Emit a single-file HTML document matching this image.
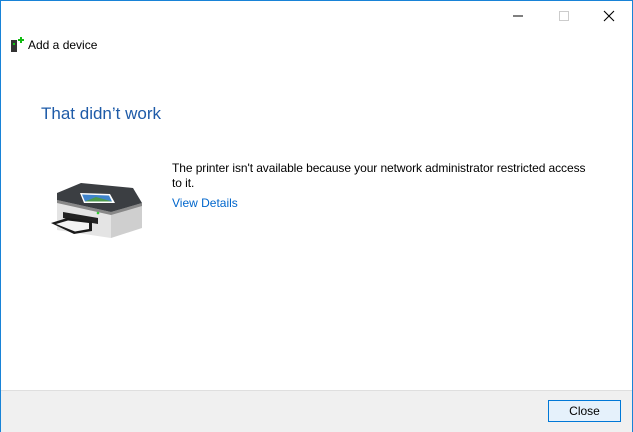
<!DOCTYPE html>
<html><head><meta charset="utf-8"><style>
*{margin:0;padding:0;box-sizing:border-box}
body{width:633px;height:432px;overflow:hidden;background:#fff;font-family:"Segoe UI","Liberation Sans",sans-serif;position:relative}
.frame{position:absolute;left:0;top:0;width:633px;height:432px;border:1px solid #1883d7;border-bottom:none}
.t{position:absolute;white-space:nowrap}
.foot{position:absolute;left:1px;right:1px;top:390px;bottom:0;background:#f0f0f0;border-top:1px solid #dfdfdf}
.btn{position:absolute;left:548px;top:400px;width:73px;height:22px;border:1px solid #0078d7;background:#e5f1fb;font-size:12px;text-align:center;line-height:20px;color:#000}
</style></head><body>
<div class="frame"></div>
<svg style="position:absolute;left:505px;top:8px" width="120" height="16">
<line x1="8" y1="8" x2="18" y2="8" stroke="#000" stroke-width="1"/>
<rect x="54.5" y="3.5" width="9" height="9" fill="none" stroke="#ccc"/>
<path d="M99 3L109 13M109 3L99 13" stroke="#000" stroke-width="1.1"/>
</svg>
<svg style="position:absolute;left:10px;top:37px" width="14" height="16">
<rect x="1" y="3" width="6" height="12" fill="#333"/>
<rect x="3" y="6" width="2" height="2" fill="#1c1"/>
<path d="M8 3h6M11 0v6" stroke="#1b1" stroke-width="2"/>
</svg>
<div class="t" style="left:28px;top:38px;font-size:12px;color:#000">Add a device</div>
<div class="t" style="left:41px;top:104px;font-size:17px;color:#1e5ba8">That didn’t work</div>
<svg style="position:absolute;left:48px;top:180px" width="95" height="60">
<path d="M9 20 L63 32 L63 58 L9 50 Z" fill="#e4e4e4"/>
<path d="M63 32 L94 23 L94 48 L63 58 Z" fill="#cfcfcf"/>
<path d="M9 20 L63 32 L94 23 L94 26 L63 35 L9 23 Z" fill="#888"/>
<path d="M9 13 L33 3 L85 8 L94 23 L63 32 L9 20 Z" fill="#3b3e42"/>
<path d="M32 13 L62 14 L67 23 L36 23 Z" fill="#fff"/>
<path d="M34 14.5 L61 15.5 L64 21.5 L37 21.5 Z" fill="#3f84cc"/>
<path d="M37 21.5 L48 17 L64 21.5Z" fill="#4c9a4c"/>
<path d="M15 32 L50 38 L50 44 L15 38 Z" fill="#222"/>
<circle cx="50" cy="33" r="1.3" fill="#3c3"/>
<path d="M3 43 L19 38 L44 41 L44 51 L26 54 Z" fill="#1a1a1a"/>
<path d="M8 44 L20 40.5 L41 43 L41 49 L27 51.5 Z" fill="#f2f2f2"/>
</svg>
<div class="t" style="left:172px;top:161px;font-size:12px;letter-spacing:-0.08px;color:#000;line-height:15px">The printer isn't available because your network administrator restricted access<br>to it.</div>
<div class="t" style="left:172px;top:196px;font-size:12px;color:#0066cc">View Details</div>
<div class="foot"></div>
<div class="btn">Close</div>
</body></html>
